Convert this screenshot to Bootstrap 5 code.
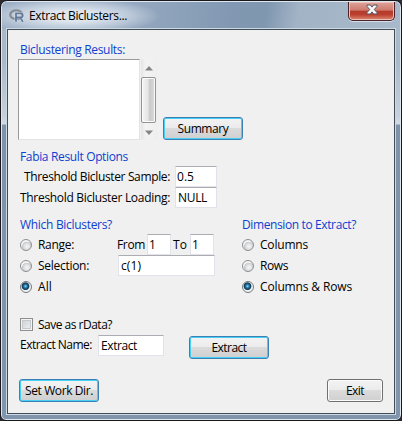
<!DOCTYPE html>
<html lang="en">
<head>
<meta charset="utf-8">
<meta name="viewport" content="width=device-width, initial-scale=1">
<title>Extract Biclusters...</title>
<link rel="stylesheet" href="https://cdn.jsdelivr.net/npm/bootstrap@5.3.0/dist/css/bootstrap.min.css">
<style>
body{width:402px;height:421px;background:#2b2b30;font-family:"Open Sans","Noto Sans",sans-serif;font-size:12px;line-height:16px;color:#000;overflow:hidden}
.win{width:402px;height:421px;border:1px solid #17171c;border-radius:7px 7px 6px 6px;padding:0 6px 5px;
 background:linear-gradient(180deg,#a9b9ca 0,#a9b9ca 60px,#c5d0dc 115px,#d3dbe4 123px,#7e93aa 124px,#8095ac 100%);box-shadow:inset 0 0 0 1px #dfe7ef}
.titlebar{height:27px;margin:1px -5px 0;padding-left:7px;border-radius:5px 5px 0 0;
 background:radial-gradient(ellipse 88px 18px at 70px 14px,rgba(240,244,249,.8) 30%,rgba(225,233,242,.45) 70%,transparent 100%),linear-gradient(100deg,#9db0c5 0,#93a7bf 35%,#8298b2 58%,#8097b0 66%,#a2b3c6 74%,#a9b9cb 100%)}
.titlebar svg{flex:none}
.caption-text{margin:1px 0 0 4px}
.closer{width:47px;height:19px;margin-right:5px;border:1px solid #4b2227;border-top:0;border-radius:0 0 5px 5px;background:linear-gradient(180deg,#dda39a 0,#cf7a6e 46%,#b43a2a 50%,#bc4030 70%,#dc8a74 100%);box-shadow:inset 0 0 0 1px #ecc0b8,0 1px 0 #d5dfe9}
.closer svg{margin-top:-3px}
.client{width:388px;height:385px;border:1px solid #414c57;background:#f0f0f0;box-shadow:0 0 0 1px #cbd9e3;padding:11px 0 0 10px}
.t{white-space:pre;flex:none;display:inline-block}
.hd{color:#0f3fcf}
.first{height:18px;padding-top:1px}
.fld{flex:none;height:21px;background:#fff;border:1px solid #e2e3ea;border-top-color:#abadb3;border-radius:1px;padding:2px 0 0 1px;white-space:pre}
.pad2{padding-left:2px}
.lst{width:122px;height:81px;background:#fff;border:1px solid #e3e3e3;border-top-color:#999;border-left-color:#999}
.sbar{width:16px;height:81px;margin-left:1px;padding:4px 1px 3px 0;background:linear-gradient(90deg,#e6e6e6,#f3f3f3 30%,#eee)}
.thumb{width:15px;height:46px;border:1px solid #949494;border-radius:2px;box-shadow:inset 0 0 0 1px #fafafa;background:linear-gradient(90deg,#f5f5f5,#e6e6e6 45%,#c9c9ca 60%,#dcdcdc)}
.wbtn{flex:none;height:23px;border:1px solid #707070;border-radius:3px;background:linear-gradient(180deg,#f3f3f3 0,#ebebeb 48%,#dbdbdb 50%,#cfcfcf 100%);box-shadow:inset 0 0 0 1px #fbfbfb;display:flex;align-items:center;justify-content:center}
.hot{border-color:#3c7fb1;box-shadow:inset 0 0 0 1px #46d0f8}
.rb{flex:none;width:12px;height:12px;border:1px solid #8e8f8f;border-radius:50%;background:radial-gradient(circle at 60% 65%,#f7f7f7 0,#dedfe0 35%,#c4c7ca 52%,#f4f4f4 56%)}
.rb.on{border-color:#77797c;background:radial-gradient(circle at 45% 42%,#9fe0f5 0,#2d87b4 1.4px,#12405f 3px,#274862 3.5px,#eef2f5 4.3px)}
.cb{width:13px;height:13px;border:1px solid #8e8f8f;background:linear-gradient(135deg,#c9ced4,#f3f3f3);box-shadow:inset 0 0 0 1px #f4f4f4,inset 0 0 0 2px #c5c9ce}
.r21{height:21px}
.w80{width:80px}
.ind{margin-left:2px}
.g6{margin-left:6px}
.fab{height:26px;padding-top:9px}
.lab{width:152px;margin-right:5px}
.f42{width:42px}
.f24{width:24px;margin-left:2px}
.f96{width:97px}
.f66{width:66px;margin-left:6px}
.to{margin-left:2px;margin-right:1px}
.groups{padding-top:8px;height:89px}
.left{width:223px}
.right{width:150px;padding-left:1px}
.gh{height:18px;padding-top:1px}
.opt{padding-left:2px}
.ol{padding-left:6px;width:86px}
.from{margin-left:-1px}
.save{height:19px;margin-top:18px;padding-left:2px}
.sv{margin-left:5px}
.nm{height:24px;margin-top:1px}
.nmt{margin-top:2px}
.ex{margin-left:25px;margin-top:1px}
.foot{margin-top:20px;padding:0 11px 0 1px}
.exit{width:56px}
</style>
</head>
<body>
<div class="win">
 <div class="titlebar d-flex align-items-center">
  <svg width="16" height="14" viewBox="0 0 16 14"><ellipse cx="7.3" cy="5.8" rx="6.1" ry="4.4" fill="none" stroke="#858b94" stroke-width="2.2"/><path d="M7 12.8V4.3h4.2q2.5 0 2.5 2.1T11.2 8.5H7M10.3 8.5l1.4.8 2.2 3.5" fill="none" stroke="#fff" stroke-opacity=".45" stroke-width="3"/><path d="M7 12.8V4.3h4.2q2.5 0 2.5 2.1T11.2 8.5H7M10.3 8.5l1.4.8 2.2 3.5" fill="none" stroke="#62799a" stroke-width="1.8"/></svg>
  <span class="t caption-text" data-w="98">Extract Biclusters...</span>
  <div class="closer ms-auto align-self-start d-flex justify-content-center align-items-center">
   <svg width="12" height="11" viewBox="0 0 12 11"><path d="M1 1h3.4L6 3.1 7.6 1H11v1.4L8.3 5.5 11 8.6V10H7.6L6 7.9 4.4 10H1V8.6l2.7-3.1L1 2.4z" fill="#f6f6f6" stroke="#535666"/></svg>
  </div>
 </div>
 <div class="client">
  <div class="d-flex first"><span class="t hd ind" data-w="105">Biclustering Results:</span></div>
  <div class="d-flex align-items-end">
   <div class="lst"></div>
   <div class="sbar d-flex flex-column align-items-center justify-content-between">
    <svg width="8" height="10" viewBox="0 0 8 10"><path d="M0 7.5L4 3l4 4.5z" fill="#858585"/></svg>
    <div class="thumb"></div>
    <svg width="8" height="10" viewBox="0 0 8 10"><path d="M0 3.5L4 8l4-4.5z" fill="#858585"/></svg>
   </div>
   <div class="wbtn hot w80 g6"><span class="t" data-w="51">Summary</span></div>
  </div>
  <div class="fab d-flex"><span class="t hd ind" data-w="108">Fabia Result Options</span></div>
  <div class="d-flex r21 align-items-center"><div class="lab text-end"><span class="t" data-w="146">Threshold Bicluster Sample:</span></div><div class="fld f42"><span class="t" data-w="17">0.5</span></div></div>
  <div class="d-flex r21 align-items-center"><div class="lab text-end"><span class="t" data-w="150">Threshold Bicluster Loading:</span></div><div class="fld f42 pad2"><span class="t" data-w="29">NULL</span></div></div>
  <div class="groups d-flex">
   <div class="left">
    <div class="gh"><span class="t hd ind" data-w="92">Which Biclusters?</span></div>
    <div class="d-flex r21 align-items-center opt"><span class="rb"></span><div class="ol"><span class="t" data-w="36">Range:</span></div><span class="t from" data-w="28">From</span><div class="fld f24"><span class="t">1</span></div><span class="t to" data-w="14">To</span><div class="fld f24"><span class="t">1</span></div></div>
    <div class="d-flex r21 align-items-center opt"><span class="rb"></span><div class="ol"><span class="t" data-w="51">Selection:</span></div><div class="fld f96 pad2"><span class="t" data-w="20">c(1)</span></div></div>
    <div class="d-flex r21 align-items-center opt"><span class="rb on"></span><div class="ol"><span class="t" data-w="14">All</span></div></div>
   </div>
   <div class="right">
    <div class="gh"><span class="t hd" data-w="114">Dimension to Extract?</span></div>
    <div class="d-flex r21 align-items-center"><span class="rb"></span><div class="ol"><span class="t" data-w="48">Columns</span></div></div>
    <div class="d-flex r21 align-items-center"><span class="rb"></span><div class="ol"><span class="t" data-w="28">Rows</span></div></div>
    <div class="d-flex r21 align-items-center"><span class="rb on"></span><div class="ol"><span class="t" data-w="92">Columns &amp; Rows</span></div></div>
   </div>
  </div>
  <div class="d-flex align-items-center save"><span class="cb"></span><span class="t sv" data-w="74">Save as rData?</span></div>
  <div class="d-flex nm"><span class="t ind nmt" data-w="72">Extract Name:</span><div class="fld f66 pad2"><span class="t" data-w="36">Extract</span></div><div class="wbtn hot w80 ex"><span class="t" data-w="35">Extract</span></div></div>
  <div class="d-flex justify-content-between foot"><div class="wbtn hot w80"><span class="t" data-w="68">Set Work Dir.</span></div><div class="wbtn exit"><span class="t" data-w="18">Exit</span></div></div>
 </div>
</div>
<script src="https://cdn.jsdelivr.net/npm/bootstrap@5.3.0/dist/js/bootstrap.bundle.min.js"></script>
<script>
document.querySelectorAll('.t[data-w]').forEach(function(e){
  var n=e.textContent.length,w=e.getBoundingClientRect().width;
  e.style.letterSpacing=((e.dataset.w-w)/n).toFixed(3)+'px';
});
</script>
</body>
</html>
